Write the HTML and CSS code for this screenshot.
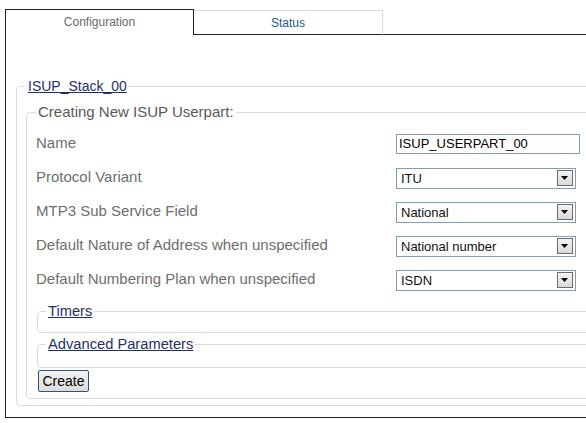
FILE: index.html
```html
<!DOCTYPE html>
<html>
<head>
<meta charset="utf-8">
<link rel="stylesheet" href="styles.css">
</head>
<body>
<div class="tabs">
  <div class="tab active">Configuration</div>
  <div class="tab">Status</div>
  <div class="tab-fill"></div>
</div>
<div class="panel">
  <fieldset class="outer">
    <legend class="stack"><a href="#">ISUP_Stack_00</a></legend>
    <fieldset class="inner">
      <legend class="plain">Creating New ISUP Userpart:</legend>
      <div class="rows">
        <div class="row">
          <span class="label">Name</span>
          <div class="input">ISUP_USERPART_00</div>
        </div>
        <div class="row">
          <span class="label">Protocol Variant</span>
          <div class="select"><span>ITU</span><span class="arrow"><svg width="8" height="4" viewBox="0 0 8 4"><path d="M0 0H7L3.5 4Z" fill="#000"/></svg></span></div>
        </div>
        <div class="row">
          <span class="label">MTP3 Sub Service Field</span>
          <div class="select"><span>National</span><span class="arrow"><svg width="8" height="4" viewBox="0 0 8 4"><path d="M0 0H7L3.5 4Z" fill="#000"/></svg></span></div>
        </div>
        <div class="row">
          <span class="label">Default Nature of Address when unspecified</span>
          <div class="select"><span>National number</span><span class="arrow"><svg width="8" height="4" viewBox="0 0 8 4"><path d="M0 0H7L3.5 4Z" fill="#000"/></svg></span></div>
        </div>
        <div class="row">
          <span class="label">Default Numbering Plan when unspecified</span>
          <div class="select"><span>ISDN</span><span class="arrow"><svg width="8" height="4" viewBox="0 0 8 4"><path d="M0 0H7L3.5 4Z" fill="#000"/></svg></span></div>
        </div>
      </div>
      <fieldset class="sub timers">
        <legend><a href="#">Timers</a></legend>
      </fieldset>
      <fieldset class="sub adv">
        <legend><a href="#">Advanced Parameters</a></legend>
      </fieldset>
      <button class="btn">Create</button>
    </fieldset>
  </fieldset>
</div>
</body>
</html>
```
FILE: styles.css
```css
html, body {
  margin: 0;
  padding: 0;
  background: #fff;
  overflow: hidden;
  width: 586px;
  height: 423px;
}
body {
  font-family: "Liberation Sans", Arial, sans-serif;
  font-size: 15px;
  color: #666;
}
.tabs {
  display: flex;
  margin-top: 9px;
  padding-left: 5px;
  height: 26px;
}
.tab {
  box-sizing: border-box;
  width: 189px;
  text-align: center;
  font-size: 12px;
}
.tab.active {
  border: 1px solid #222;
  border-bottom: none;
  color: #6a6a6a;
  padding-top: 5px;
  height: 26px;
}
.tab:not(.active) {
  margin-top: 1px;
  height: 25px;
  border-top: 1px solid #dcdce6;
  border-right: 1px solid #dcdce6;
  border-bottom: 1px solid #222;
  color: #1d5b94;
  padding-top: 5px;
}
.tab-fill {
  flex: 1;
  border-bottom: 1px solid #222;
}
.panel {
  margin-left: 5px;
  border-left: 1px solid #222;
  border-bottom: 1px solid #222;
  padding-top: 43px;
  padding-bottom: 11px;
  width: 800px;
}
fieldset {
  border: 1px solid #d6dde6;
  border-radius: 4px;
  margin: 0;
  min-width: 0;
}
legend {
  padding: 0 2px;
  line-height: 16px;
  font-size: 14.7px;
}
legend.stack {
  font-size: 14px;
}
legend a {
  color: #1f2f6c;
  text-decoration: underline;
}
legend.plain {
  color: #5a5a5a;
  font-size: 15px;
}
.outer {
  margin-left: 10px;
  padding: 10px 0 6px 9px;
  width: 760px;
}
.inner {
  padding: 7px 0 6px 9px;
}
.rows {
  display: flex;
  flex-direction: column;
}
.row {
  display: flex;
  align-items: center;
  height: 34px;
}
.label {
  width: 360px;
  color: #6e6e6e;
  padding-bottom: 3px;
}
.input {
  box-sizing: border-box;
  width: 184px;
  height: 20px;
  border: 1px solid #7f9db9;
  color: #000;
  font-size: 13px;
  line-height: 18px;
  padding-left: 2px;
}
.select {
  box-sizing: border-box;
  width: 180px;
  height: 21px;
  border: 1px solid #7f9db9;
  color: #111;
  font-size: 13px;
  display: flex;
  align-items: center;
  justify-content: space-between;
  padding: 0 2px 0 4px;
}
.arrow {
  box-sizing: border-box;
  width: 16px;
  height: 16px;
  border: 1px solid #6b6b6b;
  background: linear-gradient(#f4f4f4, #d9d9d9);
  display: flex;
  align-items: center;
  justify-content: center;
}
.sub {
  margin-left: 1px;
  padding: 0 0 0 8px;
}
.timers {
  margin-top: 6px;
  padding-bottom: 13px;
}
.adv {
  margin-top: 3px;
  padding-bottom: 15px;
}
.btn {
  display: block;
  margin: 2px 0 0 2px;
  box-sizing: border-box;
  width: 51px;
  height: 22px;
  border: 1px solid #2b5787;
  border-radius: 2px;
  background: linear-gradient(#f3f3f3, #dcdcdc);
  font-family: "Liberation Sans", Arial, sans-serif;
  font-size: 14px;
  color: #000;
  padding: 0;
}
```
